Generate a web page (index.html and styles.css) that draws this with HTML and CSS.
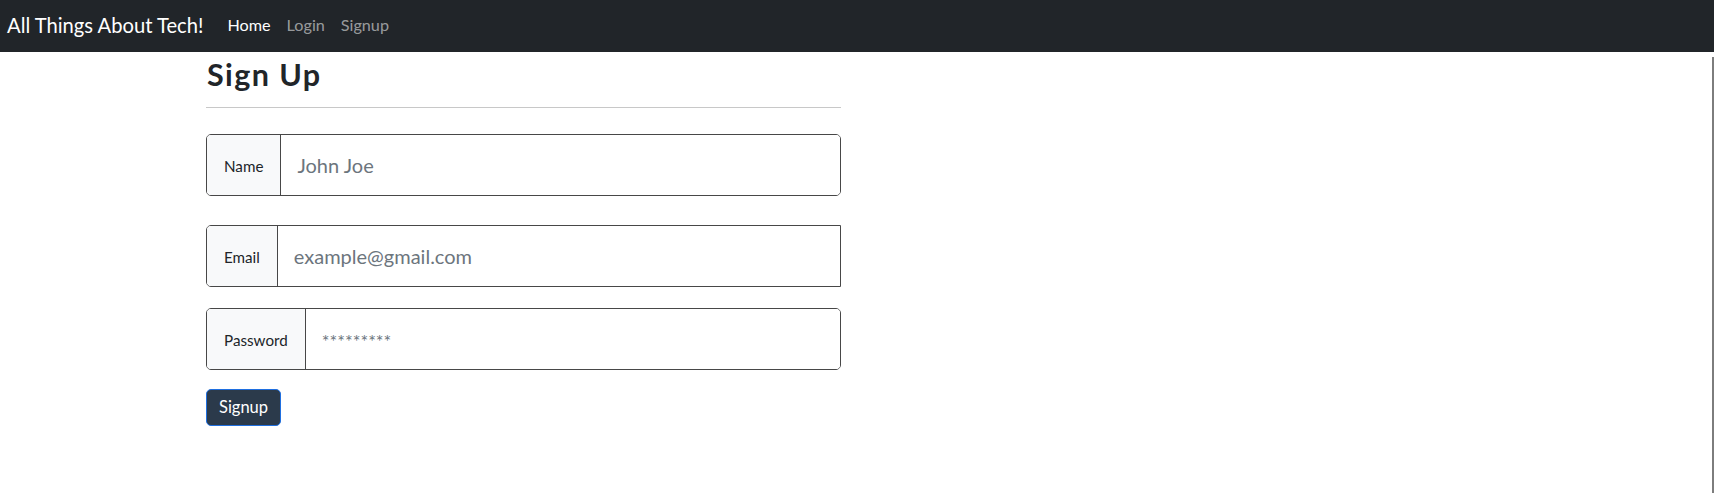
FILE: index.html
```html
<!DOCTYPE html>
<html lang="en">
<head>
<meta charset="utf-8">
<title>All Things About Tech! - Sign Up</title>
<link rel="stylesheet" href="styles.css">
</head>
<body>
<nav class="navbar">
  <a class="brand" href="#">All Things About Tech!</a>
  <a class="nav-link active" href="#">Home</a>
  <a class="nav-link" href="#">Login</a>
  <a class="nav-link" href="#">Signup</a>
</nav>
<main class="page">
  <section class="signup">
    <h2 class="title">Sign Up</h2>
    <hr class="rule">
    <form class="form">
      <div class="group group-name">
        <span class="group-label">Name</span>
        <input class="field" type="text" placeholder="John Joe">
      </div>
      <div class="group group-email">
        <span class="group-label">Email</span>
        <input class="field" type="email" placeholder="example@gmail.com">
      </div>
      <div class="group group-password">
        <span class="group-label">Password</span>
        <input class="field field-password" type="password" placeholder="*********">
      </div>
      <button class="btn" type="button">Signup</button>
    </form>
  </section>
</main>
</body>
</html>
```
FILE: styles.css
```css
html, body {
  margin: 0;
  padding: 0;
}

body {
  font-family: Lato, "Open Sans", sans-serif;
  color: #212529;
  background: #fff;
}

.navbar {
  box-sizing: border-box;
  height: 52px;
  background: #212529;
  display: flex;
  align-items: center;
  padding: 0 0 3px 7px;
}

.brand {
  font-size: 20.2px;
  color: #fff;
  text-decoration: none;
  margin-right: 16px;
}

.nav-link {
  font-size: 16.2px;
  color: rgba(255, 255, 255, 0.55);
  text-decoration: none;
  padding: 0 8px;
}

.nav-link.active {
  color: #fff;
}

.page {
  box-sizing: border-box;
  min-height: calc(100vh - 52px);
  border-right: 2px solid #7d7d7d;
  padding-left: 206px;
}

.signup {
  width: 635px;
}

.title {
  margin: 5px 0 0 1px;
  font-size: 30.5px;
  line-height: 35px;
  font-weight: 700;
  letter-spacing: 1.4px;
  color: #212529;
}

.rule {
  border: 0;
  border-top: 1px solid #c8c8c8;
  margin: 15px 0 26px;
}

.form {
  margin: 0;
}

.group {
  box-sizing: border-box;
  display: flex;
  height: 62px;
  border: 1px solid #474747;
  border-radius: 5px;
  overflow: hidden;
}

.group-name {
  margin-bottom: 29px;
}

.group-email {
  margin-bottom: 21px;
  border-radius: 5px 0 0 5px;
}

.group-password {
  margin-bottom: 19px;
}

.group-label {
  display: flex;
  align-items: center;
  padding: 2px 17px 0;
  font-size: 15.2px;
  color: #212529;
  background: #f8f9fa;
  border-right: 1px solid #474747;
}

.field {
  flex: 1;
  min-width: 0;
  border: 0;
  outline: none;
  padding: 0 16px;
  font-family: inherit;
  font-size: 20px;
  color: #495057;
  background: #fff;
}

.field::placeholder {
  color: #6c757d;
  opacity: 1;
}

.field-password {
  font-size: 18.2px;
  padding-top: 3px;
}

.btn {
  box-sizing: border-box;
  display: block;
  font-family: inherit;
  font-size: 16.5px;
  line-height: 23px;
  color: #fff;
  background: #2b3a4b;
  border: 1px solid #1f6fe0;
  border-radius: 5px;
  padding: 6px 12px;
  cursor: pointer;
}
```
